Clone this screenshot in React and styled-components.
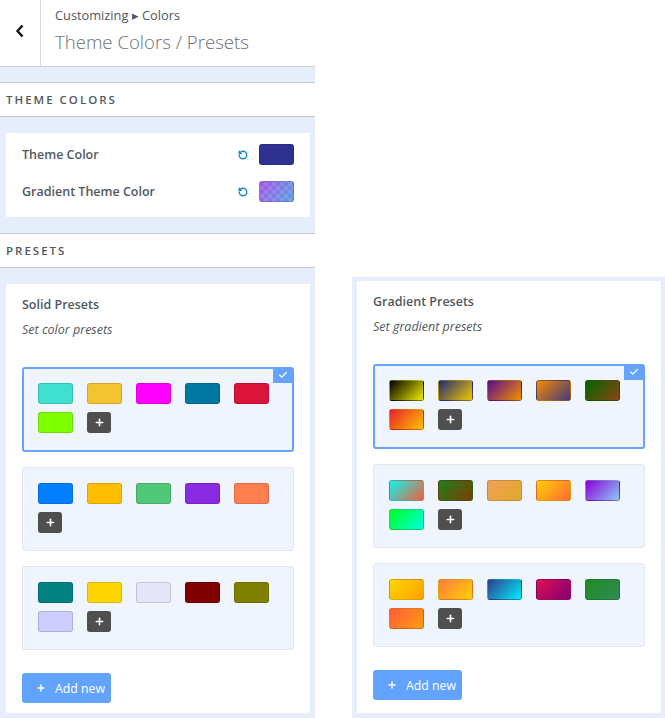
import React from 'react'
import styled, { createGlobalStyle } from 'styled-components'
import { Plus, Check, RotateCcw } from 'lucide-react'

const GlobalStyle = createGlobalStyle`
  body {
    margin: 0;
    background: #fff;
    font-family: "Open Sans", "Noto Sans", sans-serif;
    color: #50575e;
  }
`

const Page = styled.div`
  display: flex;
  align-items: flex-start;
  width: 665px;
  height: 718px;
  overflow: hidden;
`

const LeftPanel = styled.div`
  width: 315px;
  height: 718px;
  flex-shrink: 0;
  display: flex;
  flex-direction: column;
  overflow: hidden;
  background: #e6eefb;
  & > * {
    flex-shrink: 0;
  }
`

const Header = styled.div`
  display: flex;
  height: 66px;
  background: #fff;
  border-bottom: 1px solid #cfd3d8;
`

const BackButton = styled.div`
  width: 41px;
  border-right: 1px solid #dcdcde;
  display: flex;
  align-items: center;
  justify-content: center;
  padding-bottom: 4px;
  box-sizing: border-box;
`

const HeaderText = styled.div`
  padding: 5px 0 0 14px;
`

const Crumb = styled.div`
  font-size: 12.8px;
  line-height: 20px;
  color: #50575e;
`

const Title = styled.div`
  font-size: 18.6px;
  font-weight: 300;
  line-height: 33px;
  color: #6b7075;
`

const Spacer = styled.div`
  height: 15px;
`

const SectionTitle = styled.div`
  height: 33px;
  display: flex;
  align-items: center;
  padding-left: 6px;
  background: #fff;
  border-top: 1px solid #c3c6cb;
  border-bottom: 1px solid #c3c6cb;
  font-size: 11.5px;
  font-weight: 600;
  letter-spacing: 2px;
  color: #50575e;
`

const Body = styled.div`
  padding: ${(p) => (p.$last ? '16px 5px 0 6px' : '16px 5px 16px 6px')};
`

const Card = styled.div`
  background: #fff;
  padding: ${(p) => p.$pad || '12px 16px 10px'};
`

const ColorRow = styled.div`
  display: flex;
  align-items: center;
  height: 21px;
  & + & {
    margin-top: 16px;
  }
`

const RowLabel = styled.div`
  flex: 1;
  font-size: 12.5px;
  font-weight: 600;
  color: #50575e;
`

const ResetIcon = styled.span`
  display: flex;
  color: #1d8ad0;
  margin-right: 11px;
`

const ThemeSwatch = styled.div`
  width: 35px;
  height: 21px;
  border-radius: 3px;
  box-sizing: border-box;
  border: 1px solid rgba(0, 0, 0, 0.12);
  background: ${(p) => p.$bg};
`

const RightWrap = styled.div`
  margin: 277px 0 0 37px;
  width: 313px;
  height: 441px;
  box-sizing: border-box;
  padding: 4px 4px 5px 5px;
  background: #e6eefb;
`

const PresetCard = styled(Card)`
  height: 100%;
  box-sizing: border-box;
`

const CardTitle = styled.div`
  font-size: 12.5px;
  font-weight: 600;
  line-height: 18px;
  color: #50575e;
`

const CardHint = styled.div`
  font-size: 12.5px;
  font-style: italic;
  line-height: 18px;
  margin-top: 7px;
  margin-bottom: 28px;
  color: #50575e;
`

const PresetBox = styled.div`
  position: relative;
  background: #f0f5fd;
  border-radius: 3px;
  border: ${(p) => (p.$active ? '2px solid #66a3ff' : '1px solid #e3e8ef')};
  padding: ${(p) => (p.$active ? '14px 14px 17px' : '15px 15px 17px')};
  display: flex;
  flex-wrap: wrap;
  column-gap: 14px;
  row-gap: 8px;
  & + & {
    margin-top: 15px;
  }
`

const Badge = styled.div`
  position: absolute;
  top: -2px;
  right: -1px;
  width: 20px;
  height: 16px;
  background: #66a3ff;
  border-top-right-radius: 3px;
  display: flex;
  align-items: center;
  justify-content: center;
  color: #fff;
`

const Swatch = styled.div`
  width: 35px;
  height: 21px;
  box-sizing: border-box;
  border-radius: 3px;
  border: 1px solid rgba(0, 0, 0, 0.14);
  background: ${(p) => p.$bg};
`

const AddSwatch = styled.div`
  width: 24px;
  height: 21px;
  border-radius: 3px;
  background: #4f4f4f;
  display: flex;
  align-items: center;
  justify-content: center;
  color: #fff;
`

const AddButton = styled.button`
  margin-top: 23px;
  width: 89px;
  height: 30px;
  border: none;
  border-radius: 3px;
  background: #62a3ff;
  color: #fff;
  display: flex;
  align-items: center;
  gap: 9px;
  padding: 0 0 0 14px;
  font-family: "Open Sans", "Noto Sans", sans-serif;
  font-size: 12.3px;
  cursor: pointer;
`

const g = (a, b) => `linear-gradient(135deg, ${a}, ${b})`

const solidPresets = [
  ['#40e0d0', '#f4c430', '#ff00ff', '#0077a3', '#dc143c', '#7fff00'],
  ['#0080ff', '#ffbf00', '#50c878', '#8a2be2', '#ff7f50'],
  ['#008080', '#ffd700', '#e6e6fa', '#800000', '#808000', '#ccccff'],
]

const gradientPresets = [
  [
    g('#000000', '#eeee00'),
    g('#1f2a78', '#f5c800'),
    g('#5a0a8c', '#f59000'),
    g('#f58c00', '#43387e'),
    g('#006400', '#8b4513'),
    g('#e8202a', '#ffc400'),
  ],
  [
    g('#0ff5f0', '#f0603a'),
    g('#1e8020', '#803c00'),
    g('#f5a05a', '#dcaa28'),
    g('#ffd000', '#ff6a3a'),
    g('#8a00d8', '#8ecaf5'),
    g('#00ff20', '#00ffe0'),
  ],
  [
    g('#ffd600', '#ffa000'),
    g('#ff7a40', '#ffd200'),
    g('#2f3c8c', '#00f0ff'),
    g('#e0104a', '#80007a'),
    g('#228b22', '#2e8b57'),
    g('#ff5a3a', '#ffa010'),
  ],
]

const checker =
  'repeating-conic-gradient(rgba(255,255,255,0.12) 0 25%, transparent 0 50%) 0 0 / 8px 8px'

const PresetList = ({ title, hint, sets }) => (
  <>
    <CardTitle>{title}</CardTitle>
    <CardHint>{hint}</CardHint>
    {sets.map((set, i) => (
      <PresetBox key={i} $active={i === 0}>
        {i === 0 && (
          <Badge>
            <Check size={10} strokeWidth={3} />
          </Badge>
        )}
        {set.map((c, j) => (
          <Swatch key={j} $bg={c} />
        ))}
        <AddSwatch>
          <Plus size={11} strokeWidth={3.5} />
        </AddSwatch>
      </PresetBox>
    ))}
    <AddButton>
      <Plus size={10} strokeWidth={3.5} />
      Add new
    </AddButton>
  </>
)

export default function App() {
  return (
    <>
      <GlobalStyle />
      <Page>
        <LeftPanel>
          <Header>
            <BackButton>
              <svg width="10" height="14" viewBox="0 0 10 14">
                <polyline points="7.5,1.5 2.5,7 7.5,12.5" fill="none" stroke="#111" strokeWidth="2.4" />
              </svg>
            </BackButton>
            <HeaderText>
              <Crumb>Customizing ▸ Colors</Crumb>
              <Title>Theme Colors / Presets</Title>
            </HeaderText>
          </Header>
          <Spacer />
          <SectionTitle>THEME COLORS</SectionTitle>
          <Body>
            <Card $pad="11px 16px 15px">
              <ColorRow>
                <RowLabel>Theme Color</RowLabel>
                <ResetIcon>
                  <RotateCcw size={10} strokeWidth={3.4} />
                </ResetIcon>
                <ThemeSwatch $bg="#2e3190" />
              </ColorRow>
              <ColorRow>
                <RowLabel>Gradient Theme Color</RowLabel>
                <ResetIcon>
                  <RotateCcw size={10} strokeWidth={3.4} />
                </ResetIcon>
                <ThemeSwatch $bg={`${checker}, linear-gradient(135deg, #a555e6, #5aa2e2)`} />
              </ColorRow>
            </Card>
          </Body>
          <SectionTitle>PRESETS</SectionTitle>
          <Body $last>
            <Card>
              <PresetList title="Solid Presets" hint="Set color presets" sets={solidPresets} />
            </Card>
          </Body>
        </LeftPanel>
        <RightWrap>
          <PresetCard>
            <PresetList title="Gradient Presets" hint="Set gradient presets" sets={gradientPresets} />
          </PresetCard>
        </RightWrap>
      </Page>
    </>
  )
}
